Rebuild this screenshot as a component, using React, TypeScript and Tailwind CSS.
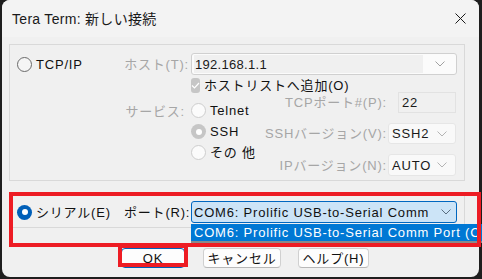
const font = "font-['Liberation_Sans','Noto_Sans_CJK_JP',sans-serif]";

function Chevron({ color = "#a0a0a0" }: { color?: string }) {
  return (
    <svg width="10" height="6" viewBox="0 0 10 6" fill="none">
      <path d="M0.5 0.5L5 5L9.5 0.5" stroke={color} strokeWidth="1" />
    </svg>
  );
}

function Radio({ state }: { state: "off" | "disabled" | "disabledOn" | "on" }) {
  if (state === "on")
    return (
      <span className="flex h-[15px] w-[15px] shrink-0 items-center justify-center rounded-full bg-[#005fb8]">
        <span className="h-[6px] w-[6px] rounded-full bg-white" />
      </span>
    );
  if (state === "disabledOn")
    return (
      <span className="flex h-[15px] w-[15px] shrink-0 items-center justify-center rounded-full bg-[#c6c6c6]">
        <span className="h-[6px] w-[6px] rounded-full bg-white" />
      </span>
    );
  if (state === "disabled")
    return <span className="h-[15px] w-[15px] shrink-0 rounded-full border border-[#cdcdcd] bg-[#fbfbfb]" />;
  return <span className="h-[15px] w-[15px] shrink-0 rounded-full border border-[#6a6a6a] bg-[#f5f5f5]" />;
}

function SmallSelect({ value }: { value: string }) {
  return (
    <div className="flex h-full w-[68px] items-center justify-between rounded-[3px] border border-[#e6e6e6] bg-[#f9f9f9] pl-[3px] pr-[8px] text-[#1a1a1a]">
      <span>{value}</span>
      <Chevron color="#b4b4b4" />
    </div>
  );
}

function Button({ label, w, primary }: { label: string; w: string; primary?: boolean }) {
  return (
    <div
      className={`flex h-[20px] items-center justify-center rounded-[4px] border bg-[#fdfdfd] text-[#111] ${w} ${
        primary ? "border-[#005fb8]" : "border-[#d0d0d0] border-b-[#b8b8b8]"
      }`}
    >
      {label}
    </div>
  );
}

export default function App() {
  return (
    <div className={`relative h-[279px] w-[482px] overflow-hidden bg-[#1e1e1e] text-[13px] leading-none tracking-[0.8px] whitespace-nowrap ${font}`}>
      <div className="ml-[2px] h-[277px] w-[477px] overflow-hidden rounded-[8px] bg-[#f0f0f0]">
        {/* title bar */}
        <div className="flex h-[37px] items-center justify-between bg-[#f3f3f3] pl-[10px] pr-[13px]">
          <span className="text-[14px] tracking-[0.3px] text-[#1a1a1a]">Tera Term: 新しい接続</span>
          <svg width="11" height="11" viewBox="0 0 11 11">
            <path d="M0.5 0.5L10.5 10.5M10.5 0.5L0.5 10.5" stroke="#1a1a1a" strokeWidth="1" />
          </svg>
        </div>

        {/* TCP/IP group */}
        <div className="ml-[7px] mt-[7px] h-[137px] w-[456px] border border-[#d9d9d9] pl-[7px] pt-[8px]">
          <div className="flex h-[22px] items-center">
            <div className="flex w-[107px] items-center gap-[4px] text-[#111]">
              <Radio state="off" />
              <span>TCP/IP</span>
            </div>
            <div className="w-[65px] text-right text-[#a6a6a6]">ホスト(T):</div>
            <div className="ml-[2px] flex h-[22px] w-[266px] items-center rounded-[3px] border border-[#d0d0d0] bg-[#fbfbfb] pr-[11px]">
              <div className="ml-[2px] flex h-[18px] flex-1 items-center bg-[#f0f0f0] pl-[1px] tracking-[0.3px] text-[#1a1a1a]">192.168.1.1</div>
              <div className="ml-[12px]">
                <Chevron />
              </div>
            </div>
          </div>

          <div className="mt-[3px] flex">
            <div className="w-[107px]" />
            <div className="w-[61px] pt-[27px] text-right text-[#a6a6a6]">サービス:</div>
            <div className="ml-[6px] w-[75px]">
              <div className="flex h-[15px] items-center gap-[4px] text-[#111]">
                <span className="flex h-[15px] w-[15px] items-center justify-center rounded-[3px] bg-[#c6c6c6]">
                  <svg width="9" height="7" viewBox="0 0 9 7">
                    <path d="M1 3.5L3.5 6L8 1" stroke="#fff" strokeWidth="1.2" fill="none" />
                  </svg>
                </span>
                <span>ホストリストへ追加(O)</span>
              </div>
              <div className="mt-[7px] flex h-[21px] items-center gap-[4px] text-[#111]">
                <Radio state="disabled" />
                <span>Telnet</span>
              </div>
              <div className="flex h-[21px] items-center gap-[4px] text-[#111]">
                <Radio state="disabledOn" />
                <span>SSH</span>
              </div>
              <div className="flex h-[21px] items-center gap-[4px] text-[#111]">
                <Radio state="disabled" />
                <span>その 他</span>
              </div>
            </div>
            <div className="w-[190px]">
              <div className="mt-[14px] flex h-[21px] items-center justify-end">
                <span className="text-[#a6a6a6]">TCPポート#(P):</span>
                <div className="ml-[11px] flex h-full w-[58px] items-center border border-[#e2e2e2] pl-[3px] text-[#1a1a1a]">22</div>
              </div>
              <div className="mt-[10px] flex h-[21px] items-center justify-end">
                <span className="text-[#a6a6a6]">SSHバージョン(V):</span>
                <div className="ml-[1px] h-full">
                  <SmallSelect value="SSH2" />
                </div>
              </div>
              <div className="mt-[10px] flex h-[22px] items-center justify-end">
                <span className="text-[#a6a6a6]">IPバージョン(N):</span>
                <div className="ml-[1px] h-full">
                  <SmallSelect value="AUTO" />
                </div>
              </div>
            </div>
          </div>
        </div>

        {/* Serial group */}
        <div className="ml-[7px] mt-[13px] h-[34px] w-[456px] border border-[#d9d9d9] pl-[7px] pt-[6px]">
          <div className="flex h-[22px] items-center">
            <div className="flex w-[107px] items-center gap-[4px] text-[#111]">
              <Radio state="on" />
              <span>シリアル(E)</span>
            </div>
            <div className="w-[63px] text-right text-[#111]">ポート(R):</div>
            <div className="ml-[4px] flex h-[22px] w-[266px] items-center justify-between rounded-[3px] border border-[#0067c0] bg-[#cce4f7] pl-[2px] pr-[5px] text-[#111]">
              <span className="overflow-hidden">COM6: Prolific USB-to-Serial Comm</span>
              <Chevron color="#5a6e80" />
            </div>
          </div>
        </div>

        {/* buttons */}
        <div className="ml-[119px] mt-[20px] flex items-center">
          <Button label="OK" w="w-[64px]" primary />
          <div className="ml-[18px]">
            <Button label="キャンセル" w="w-[78px]" />
          </div>
          <div className="ml-[17px]">
            <Button label="ヘルプ(H)" w="w-[71px]" />
          </div>
        </div>
      </div>

      {/* open dropdown list */}
      <div className="absolute left-[191px] top-[224px] h-[19px] w-[291px] overflow-hidden border-b-2 border-[#8a8a8a] bg-[#0078d4] pl-[3px] pt-[2px] text-white">
        <span>COM6: Prolific USB-to-Serial Comm Port (C</span>
      </div>

      {/* red annotation boxes */}
      <div className="absolute left-[9px] top-[192px] h-[55px] w-[472px] border-4 border-[#ed1c24]" />
      <div className="absolute left-[118px] top-[244px] h-[23px] w-[70px] border-4 border-[#ed1c24]" />
    </div>
  );
}
